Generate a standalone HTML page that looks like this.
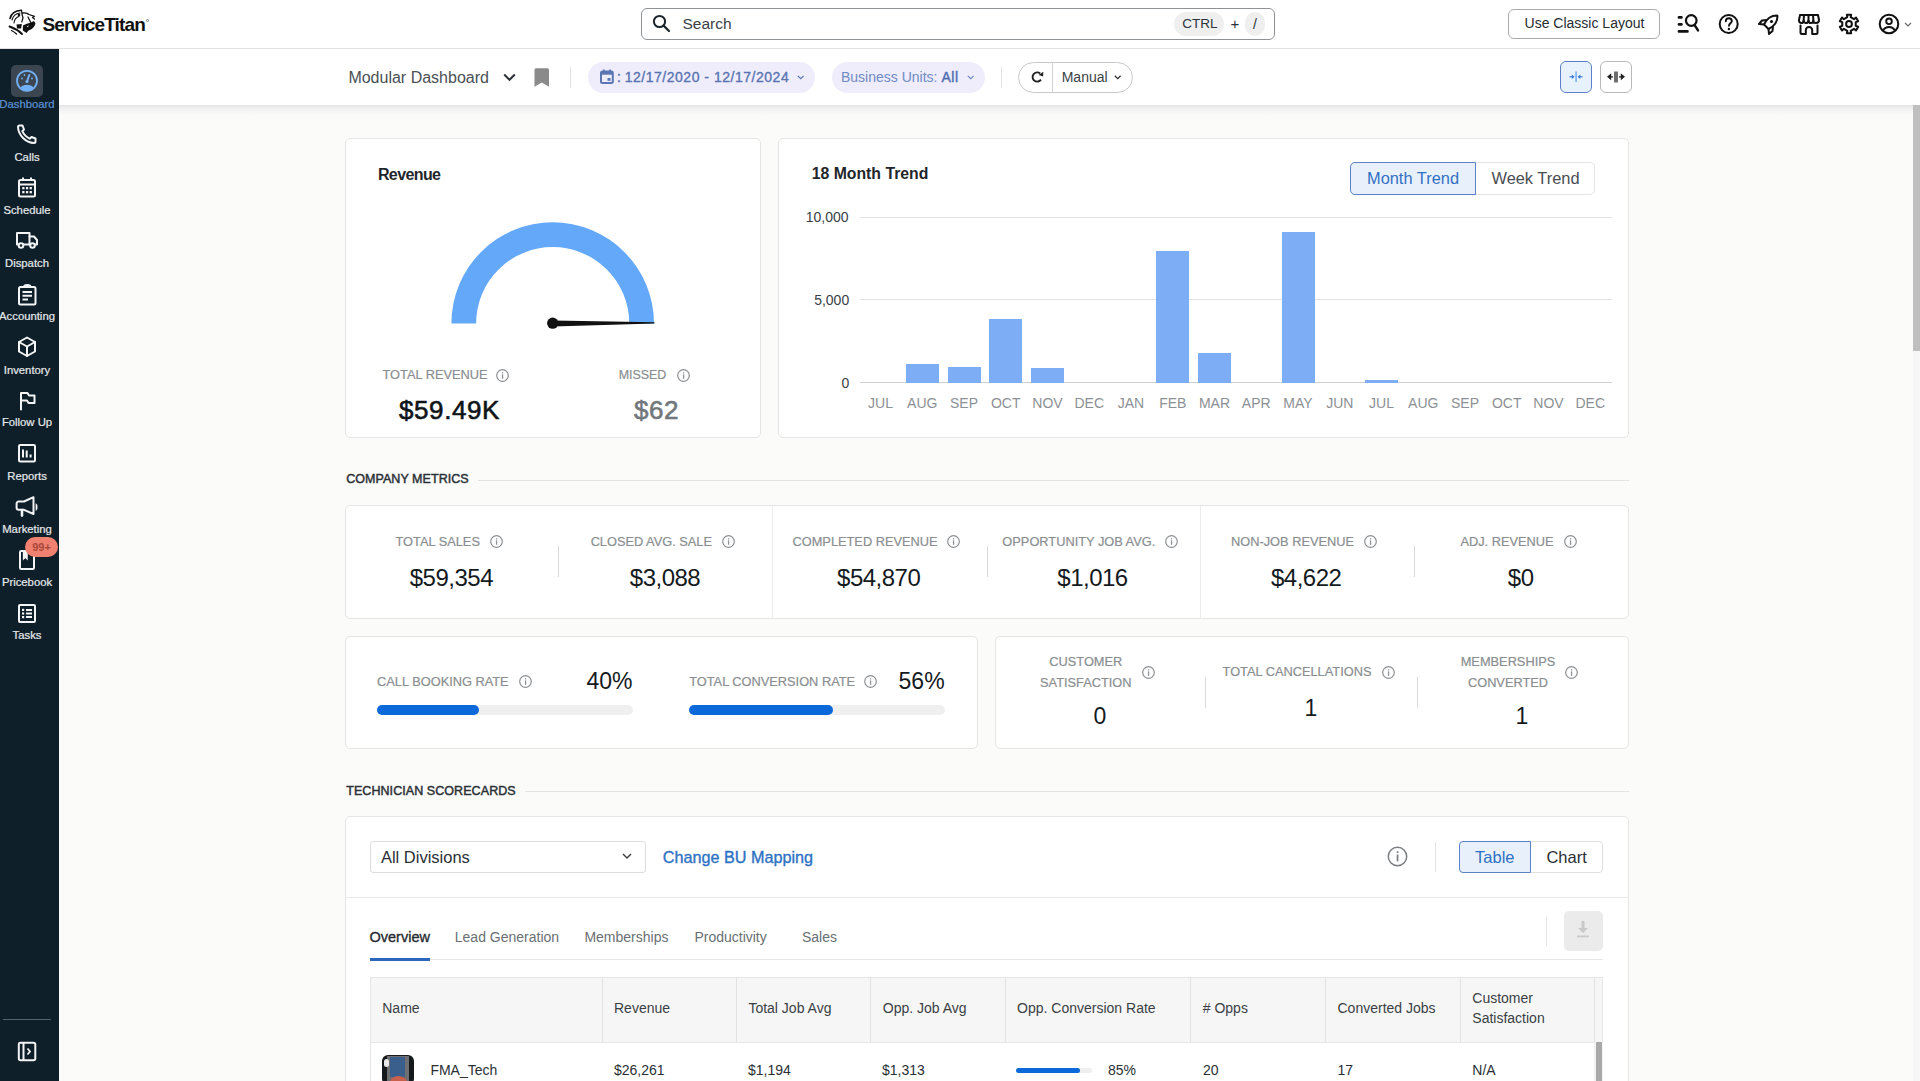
<!DOCTYPE html>
<html><head><meta charset="utf-8">
<style>
*{box-sizing:border-box;margin:0;padding:0}
html,body{width:1920px;height:1081px;overflow:hidden;background:#fbfbfa;font-family:"Liberation Sans",sans-serif;color:#1e2428}
.a{position:absolute}
.t{position:absolute;white-space:nowrap}
svg{display:block;overflow:visible}
.card{position:absolute;background:#fff;border:1px solid #e5e5e5;border-radius:5px}
</style></head>
<body>

<div class="a" style="left:0px;top:0px;width:1920px;height:48px;background:#fff;border-bottom:1px solid #e2e2e2;height:49px"></div>
<svg class="a" style="left:6px;top:6px;" width="34" height="32" viewBox="0 0 34 32">
<g fill="none" stroke="#111" stroke-linecap="round" stroke-linejoin="round">
<path d="M4 12.5 C5 8 9 4.5 15.5 4.2" stroke-width="1.6"/>
<path d="M6 14 C7 10 10 7.5 14 7" stroke-width="1.1"/>
<path d="M8 17 C8.5 13 10.5 11 13 10.5" stroke-width="1.1"/>
<path d="M15.5 4.5 L16 8 L17 12 L15.8 16" stroke-width="1.2"/>
<path d="M16.5 7 C19 6.5 21.5 7 23 8.5 L28.5 10.3 L26.5 11.5 L28.5 13" stroke-width="1.3"/>
<path d="M22 11 C23 13 24 15 25 17" stroke-width="1.2"/>
<path d="M3.5 20.5 C8 22 12 24 16 28" stroke-width="1.9"/>
<path d="M5.5 24.5 C7.5 25.5 9 26.5 10.5 28" stroke-width="1.3"/>
</g>
<path fill="#111" d="M10.5 18.5 L15.8 18 L15.2 22.5 L11 22.5 Z"/>
<path fill="#111" d="M17 19.5 C20 17.5 25 17 28 15 L29.5 17.5 C28.5 21 26 23.5 22.5 24.5 L20.5 27 L16.8 24.5 Z"/>
<path fill="#fff" d="M20.5 20.5 L23 19.5 L22 21 Z"/>
<circle cx="13" cy="9" r="1.3" fill="#111"/>
</svg>
<div class="t" style="top:14.91px;font-size:19px;line-height:19px;color:#111;font-weight:700;letter-spacing:-0.85px;left:42.5px;">ServiceTitan</div>
<div class="a" style="left:146px;top:19px;width:3px;height:3px;border:0.6px solid #777;border-radius:50%"></div>
<div class="a" style="left:641px;top:8px;width:634px;height:32px;border:1.5px solid #8e9295;border-radius:6px;background:#fff"></div>
<svg class="a" style="left:651px;top:13px;" width="22" height="22" viewBox="0 0 22 22"><circle cx="8.5" cy="8.5" r="5.6" fill="none" stroke="#1b252b" stroke-width="2"/><path d="M12.6 12.6 L18 18" stroke="#1b252b" stroke-width="2.2" stroke-linecap="round"/></svg>
<div class="t" style="top:15.88px;font-size:15.5px;line-height:15.5px;color:#3b4045;left:682.5px;">Search</div>
<div class="a" style="left:1174px;top:12px;width:50px;height:24px;background:#efefef;border-radius:12px"></div>
<div class="t" style="top:17.07px;font-size:13.5px;line-height:13.5px;color:#2a3439;left:800px;width:800px;text-align:center;">CTRL</div>
<div class="t" style="top:16.30px;font-size:15px;line-height:15px;color:#2a3439;left:835px;width:800px;text-align:center;">+</div>
<div class="a" style="left:1245px;top:12px;width:20px;height:24px;background:#efefef;border-radius:10px"></div>
<div class="t" style="top:16.65px;font-size:14px;line-height:14px;color:#2a3439;left:855px;width:800px;text-align:center;">/</div>
<div class="a" style="left:1508px;top:9px;width:152px;height:30px;border:1px solid #a9acaf;border-radius:6px"></div>
<div class="t" style="top:16.15px;font-size:14px;line-height:14px;color:#262c30;left:1184.5px;width:800px;text-align:center;">Use Classic Layout</div>
<svg class="a" style="left:1677px;top:13px;" width="24" height="22" viewBox="0 0 24 22"><g stroke="#111" stroke-linecap="round" fill="none">
<path d="M2 4.4 H4.4 M2 11.4 H4.4 M2 18.4 H10.4" stroke-width="2.8"/>
<circle cx="14.25" cy="7.5" r="5.3" stroke-width="2.2"/><path d="M17.8 12.3 L21 17.4" stroke-width="2.4"/></g></svg>
<svg class="a" style="left:1718px;top:13px;" width="22" height="22" viewBox="0 0 22 22"><circle cx="10.7" cy="11" r="9" fill="none" stroke="#111" stroke-width="2"/>
<path d="M7.8 8.3 C7.8 6.3 9.2 5.2 10.8 5.2 C12.6 5.2 13.8 6.4 13.8 8 C13.8 10.2 11 10.4 11 12.8" fill="none" stroke="#111" stroke-width="1.9" stroke-linecap="round"/>
<circle cx="10.9" cy="16" r="1.2" fill="#111"/></svg>
<svg class="a" style="left:1757px;top:14px;" width="22" height="22" viewBox="0 0 22 22"><g fill="none" stroke="#111" stroke-width="2" stroke-linejoin="round">
<path d="M20 1.5 C14 1.5 9.5 5 7 10.5 L11.5 15 C17 12.5 20.5 8 20.5 2 Z"/>
<path d="M7 10.5 L2 10 L5 6.5 L10 6"/>
<path d="M11.5 15 L12 20 L15.5 17 L16 12"/></g>
<circle cx="14.5" cy="7.5" r="1.6" fill="#111"/></svg>
<svg class="a" style="left:1797px;top:13px;" width="24" height="23" viewBox="0 0 24 23"><g fill="none" stroke="#111" stroke-width="2" stroke-linejoin="round" stroke-linecap="round">
<path d="M3 2 H21 L22 7 C22 9 20.5 10 19 10 C17.5 10 16.3 9 16.3 7.5 C16.3 9 15 10 13.7 10 C12.3 10 11.7 9 11.5 7.5 C11.3 9 10.5 10 9 10 C7.5 10 6.8 9 6.7 7.5 C6.5 9 5.5 10 4.5 10 C3 10 1.8 9 2 7 Z"/>
<path d="M7 2 L6.6 7.5"/><path d="M11.5 2 V7.5"/><path d="M16 2 L16.4 7.5"/>
<path d="M3.5 12.5 V19.5 Q3.5 21 5 21 H8.8 V17.2 A3.2 3.2 0 0 1 15.2 17.2 V21 H19 Q20.5 21 20.5 19.5 V12.5"/></g></svg>
<svg class="a" style="left:1839px;top:14px;" width="20" height="20" viewBox="0 0 20 20"><path d="M7.84 0.65 L12.16 0.65 L11.69 3.21 L15.04 5.14 L17.02 3.45 L19.18 7.19 L16.73 8.07 L16.73 11.93 L19.18 12.81 L17.02 16.55 L15.04 14.86 L11.69 16.79 L12.16 19.35 L7.84 19.35 L8.31 16.79 L4.96 14.86 L2.98 16.55 L0.82 12.81 L3.27 11.93 L3.27 8.07 L0.82 7.19 L2.98 3.45 L4.96 5.14 L8.31 3.21Z" fill="none" stroke="#111" stroke-width="2" stroke-linejoin="round"/><circle cx="10" cy="10" r="2.9" fill="none" stroke="#111" stroke-width="2"/></svg>
<svg class="a" style="left:1878px;top:13px;" width="22" height="22" viewBox="0 0 22 22"><circle cx="11" cy="11" r="9.3" fill="none" stroke="#111" stroke-width="2"/>
<circle cx="11" cy="8.3" r="2.8" fill="none" stroke="#111" stroke-width="1.9"/>
<path d="M5 17.5 C6.5 15 8.5 14 11 14 C13.5 14 15.5 15 17 17.5" fill="none" stroke="#111" stroke-width="1.9"/></svg>
<svg class="a" style="left:1904px;top:22px;" width="8" height="5" viewBox="0 0 8 5"><path d="M1 1 L4 4 L7 1" fill="none" stroke="#666" stroke-width="1.2"/></svg>
<div class="a" style="left:59px;top:105px;width:1861px;height:10px;background:linear-gradient(#e3e3e3,#ececec 25%,#f4f4f4 55%,#fbfbfa)"></div>
<div class="a" style="left:59px;top:49px;width:1861px;height:56px;background:#fff"></div>
<div class="t" style="top:70.05px;font-size:16px;line-height:16px;color:#4b5055;left:348.4px;">Modular Dashboard</div>
<svg class="a" style="left:503px;top:73px;" width="14" height="9" viewBox="0 0 14 9"><path d="M1.2 1.5 L6.5 6.8 L11.8 1.5" fill="none" stroke="#2a3035" stroke-width="2"/></svg>
<svg class="a" style="left:534px;top:68px;" width="16" height="19" viewBox="0 0 16 19"><path d="M0.5 2 C0.5 0.8 1.3 0.3 2.5 0.3 H13 C14.2 0.3 15 0.8 15 2 V18.7 L7.75 14.5 L0.5 18.7 Z" fill="#8a8a8a"/></svg>
<div class="a" style="left:570px;top:67px;width:1px;height:21px;background:#e2e2e2"></div>
<div class="a" style="left:588px;top:62px;width:227px;height:31px;background:#efedfb;border-radius:16px"></div>
<svg class="a" style="left:600px;top:69px;" width="14" height="15" viewBox="0 0 14 15"><rect x="1" y="2.5" width="11.8" height="11.5" rx="1.5" fill="none" stroke="#5b77b3" stroke-width="2"/>
<rect x="1" y="2.5" width="11.8" height="3.2" fill="#5b77b3"/><path d="M3.8 0.5 V3 M10 0.5 V3" stroke="#5b77b3" stroke-width="1.8"/>
<rect x="7.5" y="9" width="3" height="2.8" fill="#5b77b3"/></svg>
<div class="t" style="top:70.15px;font-size:14px;line-height:14px;color:#5874b2;-webkit-text-stroke:0.35px #5874b2;left:617px;">:</div>
<div class="t" style="top:70.15px;font-size:14px;line-height:14px;color:#5874b2;-webkit-text-stroke:0.35px #5874b2;letter-spacing:0.52px;left:624.7px;">12/17/2020 - 12/17/2024</div>
<svg class="a" style="left:797px;top:75px;" width="8" height="5" viewBox="0 0 8 5"><path d="M0.8 0.8 L3.7 3.7 L6.6 0.8" fill="none" stroke="#5874b2" stroke-width="1.2"/></svg>
<div class="a" style="left:832px;top:62px;width:153px;height:31px;background:#efedfb;border-radius:16px"></div>
<div class="t" style="left:841px;top:70.15px;font-size:14px;line-height:14px;color:#6e8ac3">Business Units: <b style="color:#4d6cb0;font-weight:400;-webkit-text-stroke:0.4px #4d6cb0;letter-spacing:0.6px">All</b></div>
<svg class="a" style="left:966.5px;top:75px;" width="8" height="5" viewBox="0 0 8 5"><path d="M0.8 0.8 L3.7 3.7 L6.6 0.8" fill="none" stroke="#6e8ac3" stroke-width="1.2"/></svg>
<div class="a" style="left:1001px;top:67px;width:1px;height:21px;background:#e2e2e2"></div>
<div class="a" style="left:1018px;top:62px;width:115px;height:31px;border:1px solid #c9c9c9;border-radius:16px"></div>
<svg class="a" style="left:1030px;top:70px;" width="15" height="15" viewBox="0 0 15 15"><path d="M10.16 3.48 A4.6 4.6 0 1 0 10.97 9.64" fill="none" stroke="#222" stroke-width="1.9"/><path d="M13.3 1.7 L13.1 6.4 L8.6 5.0 Z" fill="#222"/></svg>
<div class="a" style="left:1052px;top:62px;width:1px;height:31px;background:#d2d2d2"></div>
<div class="t" style="top:70.15px;font-size:14px;line-height:14px;color:#3a3f44;left:1061.7px;">Manual</div>
<svg class="a" style="left:1114px;top:75px;" width="8" height="5" viewBox="0 0 8 5"><path d="M0.8 0.8 L3.7 3.7 L6.6 0.8" fill="none" stroke="#333" stroke-width="1.3"/></svg>
<div class="a" style="left:1560px;top:61px;width:32px;height:32px;border:1.5px solid #5a80c8;background:#e8f2fc;border-radius:6px"></div>
<svg class="a" style="left:1568px;top:70px;" width="16" height="14" viewBox="0 0 16 14"><rect x="7.3" y="1.5" width="1.6" height="10.5" fill="#78aef5"/>
<path d="M1.5 6.8 H5.5" stroke="#3b7fd9" stroke-width="1.2"/><path d="M6.6 6.8 L3.8 4.6 V9 Z" fill="#3b7fd9"/>
<path d="M14.5 6.8 H10.5" stroke="#3b7fd9" stroke-width="1.2"/><path d="M9.6 6.8 L12.4 4.6 V9 Z" fill="#3b7fd9"/></svg>
<div class="a" style="left:1600px;top:61px;width:32px;height:32px;border:1px solid #b8b8b8;background:#fff;border-radius:6px"></div>
<svg class="a" style="left:1607px;top:70px;" width="18" height="14" viewBox="0 0 18 14"><rect x="7" y="1.5" width="4" height="11" fill="#6f6f6f"/>
<path d="M1 6.8 L3.6 4.6 V9 Z M3 6.8 H6" fill="#222" stroke="#222" stroke-width="1.2"/>
<path d="M17 6.8 L14.4 4.6 V9 Z M15 6.8 H12" fill="#222" stroke="#222" stroke-width="1.2"/></svg>
<div class="a" style="left:1913px;top:105px;width:7px;height:976px;background:#f6f6f6"></div>
<div class="a" style="left:1913px;top:105px;width:7px;height:246px;background:#bfbfbf"></div>
<div class="a" style="left:0px;top:49px;width:59px;height:1032px;background:#0f1f29"></div>
<div class="a" style="left:11px;top:65px;width:32px;height:32px;background:#3b4650;border-radius:5px"></div>
<svg class="a" style="left:15px;top:69px;" width="24" height="24" viewBox="0 0 24 24"><circle cx="12" cy="11.8" r="10" fill="none" stroke="#72b0f6" stroke-width="1.8"/>
<path d="M5.5 18.5 C7 16.6 9.3 15.8 12 15.8 C14.7 15.8 17 16.6 18.5 18.5 C16.8 20.6 14.5 21.6 12 21.6 C9.5 21.6 7.2 20.6 5.5 18.5 Z" fill="#72b0f6"/>
<path d="M12 12.5 L14.3 6" stroke="#72b0f6" stroke-width="2" stroke-linecap="round"/>
<circle cx="12" cy="12.5" r="1.6" fill="#72b0f6"/>
<circle cx="7" cy="9.5" r="0.9" fill="#72b0f6"/><circle cx="9.5" cy="6" r="0.9" fill="#72b0f6"/><circle cx="17" cy="9.5" r="0.9" fill="#72b0f6"/></svg>
<div class="t" style="top:98.73px;font-size:11.3px;line-height:11.3px;color:#5f93d6;-webkit-text-stroke:0.2px #5f93d6;left:-373px;width:800px;text-align:center;">Dashboard</div>
<div class="t" style="top:152.13px;font-size:11.3px;line-height:11.3px;color:#e6e9eb;-webkit-text-stroke:0.2px #e6e9eb;left:-373px;width:800px;text-align:center;">Calls</div>
<div class="t" style="top:204.83px;font-size:11.3px;line-height:11.3px;color:#e6e9eb;-webkit-text-stroke:0.2px #e6e9eb;left:-373px;width:800px;text-align:center;">Schedule</div>
<div class="t" style="top:258.23px;font-size:11.3px;line-height:11.3px;color:#e6e9eb;-webkit-text-stroke:0.2px #e6e9eb;left:-373px;width:800px;text-align:center;">Dispatch</div>
<div class="t" style="top:311.43px;font-size:11.3px;line-height:11.3px;color:#e6e9eb;-webkit-text-stroke:0.2px #e6e9eb;left:-373px;width:800px;text-align:center;">Accounting</div>
<div class="t" style="top:364.83px;font-size:11.3px;line-height:11.3px;color:#e6e9eb;-webkit-text-stroke:0.2px #e6e9eb;left:-373px;width:800px;text-align:center;">Inventory</div>
<div class="t" style="top:417.43px;font-size:11.3px;line-height:11.3px;color:#e6e9eb;-webkit-text-stroke:0.2px #e6e9eb;left:-373px;width:800px;text-align:center;">Follow Up</div>
<div class="t" style="top:470.93px;font-size:11.3px;line-height:11.3px;color:#e6e9eb;-webkit-text-stroke:0.2px #e6e9eb;left:-373px;width:800px;text-align:center;">Reports</div>
<div class="t" style="top:523.73px;font-size:11.3px;line-height:11.3px;color:#e6e9eb;-webkit-text-stroke:0.2px #e6e9eb;left:-373px;width:800px;text-align:center;">Marketing</div>
<div class="t" style="top:577.13px;font-size:11.3px;line-height:11.3px;color:#e6e9eb;-webkit-text-stroke:0.2px #e6e9eb;left:-373px;width:800px;text-align:center;">Pricebook</div>
<div class="t" style="top:629.83px;font-size:11.3px;line-height:11.3px;color:#e6e9eb;-webkit-text-stroke:0.2px #e6e9eb;left:-373px;width:800px;text-align:center;">Tasks</div>
<svg class="a" style="left:17px;top:124px;" width="20" height="20" viewBox="0 0 20 20"><path fill="none" stroke="#f2f4f5" stroke-width="2" stroke-linejoin="round" stroke-linecap="round" d="M2.5 1.5 H5.5 L7 5.5 L5.3 7.2 C6.8 10.5 9.5 13.2 12.8 14.7 L14.5 13 L18.5 14.5 V17.5 C18.5 18.3 17.8 19 17 19 C8.7 18.6 1.4 11.3 1 3 C1 2.2 1.7 1.5 2.5 1.5 Z"/></svg>
<svg class="a" style="left:17px;top:176px;" width="20" height="23" viewBox="0 0 20 23"><rect x="2" y="4" width="16" height="16.5" rx="1.5" fill="none" stroke="#f2f4f5" stroke-width="2" stroke-linejoin="round" stroke-linecap="round"/>
<path d="M2 8.5 H18" stroke="#f2f4f5" stroke-width="2"/><path d="M6 1.5 V5 M14 1.5 V5" stroke="#f2f4f5" stroke-width="2"/>
<g fill="#f2f4f5"><rect x="5.2" y="11" width="2.3" height="2.3"/><rect x="8.9" y="11" width="2.3" height="2.3"/><rect x="12.6" y="11" width="2.3" height="2.3"/>
<rect x="5.2" y="15" width="2.3" height="2.3"/><rect x="8.9" y="15" width="2.3" height="2.3"/><rect x="12.6" y="15" width="2.3" height="2.3"/></g></svg>
<svg class="a" style="left:15px;top:231px;" width="24" height="19" viewBox="0 0 24 19"><path fill="none" stroke="#f2f4f5" stroke-width="2" stroke-linejoin="round" stroke-linecap="round" d="M2 2 H14.5 V13.5 H2 Z"/><path fill="none" stroke="#f2f4f5" stroke-width="2" stroke-linejoin="round" stroke-linecap="round" d="M14.5 5.5 H19 L22 9 V13.5 H14.5"/>
<circle cx="6" cy="14.5" r="2.3" fill="#0f1f29" stroke="#f2f4f5" stroke-width="2"/><circle cx="17.5" cy="14.5" r="2.3" fill="#0f1f29" stroke="#f2f4f5" stroke-width="2"/></svg>
<svg class="a" style="left:17px;top:284px;" width="21" height="22" viewBox="0 0 21 22"><rect x="2" y="3" width="16.5" height="17.5" rx="1.5" fill="none" stroke="#f2f4f5" stroke-width="2" stroke-linejoin="round" stroke-linecap="round"/>
<path d="M7 3 C7 1.5 8.5 1 10.25 1 C12 1 13.5 1.5 13.5 3" fill="none" stroke="#f2f4f5" stroke-width="2" stroke-linejoin="round" stroke-linecap="round"/>
<path d="M5.5 8 H15 M5.5 11.8 H15 M5.5 15.5 H11" stroke="#f2f4f5" stroke-width="2"/></svg>
<svg class="a" style="left:17px;top:336px;" width="20" height="22" viewBox="0 0 20 22"><path fill="none" stroke="#f2f4f5" stroke-width="2" stroke-linejoin="round" stroke-linecap="round" d="M10 1.5 L18 6 V15.5 L10 20 L2 15.5 V6 Z"/><path fill="none" stroke="#f2f4f5" stroke-width="2" stroke-linejoin="round" stroke-linecap="round" d="M2 6 L10 10.5 L18 6 M10 10.5 V20"/></svg>
<svg class="a" style="left:19px;top:391px;" width="17" height="20" viewBox="0 0 17 20"><path fill="none" stroke="#f2f4f5" stroke-width="2" stroke-linejoin="round" stroke-linecap="round" d="M2 18.5 V2 H8.5 L10 4.5 H15.5 V12 H9.5 L8 9.5 H2"/></svg>
<svg class="a" style="left:17px;top:443px;" width="20" height="21" viewBox="0 0 20 21"><rect x="2" y="2" width="16" height="16.5" rx="1.2" fill="none" stroke="#f2f4f5" stroke-width="2" stroke-linejoin="round" stroke-linecap="round"/>
<path d="M6 6.5 V14.5 M9.7 7.5 V14.5 M13.6 11.5 V14.5" stroke="#f2f4f5" stroke-width="2"/></svg>
<svg class="a" style="left:15px;top:496px;" width="24" height="22" viewBox="0 0 24 22"><path fill="none" stroke="#f2f4f5" stroke-width="2" stroke-linejoin="round" stroke-linecap="round" d="M9 5.5 L18.5 1.2 V18 L9 13.8 H3.6 C2.5 13.8 1.6 12.9 1.6 11.8 V7.5 C1.6 6.4 2.5 5.5 3.6 5.5 Z"/>
<path d="M7 14 V19.6" stroke="#f2f4f5" stroke-width="2.6" stroke-linecap="round"/><path d="M20.6 7.2 C23.2 7.8 23.2 14.2 20.6 14.8 Z" fill="#f2f4f5"/></svg>
<svg class="a" style="left:18px;top:549px;" width="18" height="22" viewBox="0 0 18 22"><rect x="2" y="2" width="14" height="18" rx="1.2" fill="none" stroke="#f2f4f5" stroke-width="2" stroke-linejoin="round" stroke-linecap="round"/>
<path d="M5.5 2 V10 L7.3 8.3 L9.1 10 V2" fill="#f2f4f5" stroke="#f2f4f5" stroke-width="1.3"/></svg>
<div class="a" style="left:25px;top:537px;width:33px;height:20px;background:#f0806f;border-radius:10px"></div>
<div class="t" style="top:541.69px;font-size:11px;line-height:11px;color:#a9473b;font-weight:700;left:-358.5px;width:800px;text-align:center;">99+</div>
<svg class="a" style="left:17px;top:603px;" width="20" height="21" viewBox="0 0 20 21"><rect x="2" y="2" width="16" height="17" rx="1" fill="none" stroke="#f2f4f5" stroke-width="2" stroke-linejoin="round" stroke-linecap="round"/>
<g fill="#f2f4f5"><rect x="5" y="5.8" width="2.2" height="2.2"/><rect x="5" y="9.4" width="2.2" height="2.2"/><rect x="5" y="13" width="2.2" height="2.2"/></g>
<path d="M9 6.9 H15 M9 10.5 H15 M9 14.1 H15" stroke="#f2f4f5" stroke-width="2"/></svg>
<div class="a" style="left:3px;top:1018.5px;width:48px;height:1.2px;background:#56626b"></div>
<svg class="a" style="left:17px;top:1041px;" width="20" height="21" viewBox="0 0 20 21"><rect x="1.8" y="1.8" width="16.5" height="17.5" rx="1.8" fill="none" stroke="#f2f4f5" stroke-width="2" stroke-linejoin="round" stroke-linecap="round"/>
<path d="M6.5 2 V19" stroke="#f2f4f5" stroke-width="2"/><path d="M10.5 7.5 L13 10.5 L10.5 13.5" fill="none" stroke="#f2f4f5" stroke-width="1.8"/></svg>
<div class="card" style="left:344.5px;top:137.5px;width:416px;height:300.5px"></div>
<div class="t" style="top:166.75px;font-size:16px;line-height:16px;color:#1f262b;font-weight:700;letter-spacing:-0.6px;left:377.9px;">Revenue</div>
<svg class="a" style="left:0px;top:0px;width:1920px;height:1081px;left:0;top:0" width="1" height="1" viewBox="0 0 1920 1081"><path d="M451.40000000000003 323.6 A101.3 101.3 0 0 1 654.0 323.6 L629.3000000000001 323.6 A76.6 76.6 0 0 0 476.1 323.6 Z" fill="#64a9f9"/>
<path d="M552.7 320.40000000000003 L654.5 322.3 L654.5 323.5 L552.7 326.6 Z" fill="#111"/>
<circle cx="552.7" cy="323.20000000000005" r="5.6" fill="#111"/></svg>
<div class="t" style="top:368.96px;font-size:12.8px;line-height:12.8px;color:#8a8e91;-webkit-text-stroke:0.2px #8a8e91;left:382.5px;">TOTAL REVENUE</div>
<svg class="a" style="left:495.8px;top:368.8px" width="13" height="13" viewBox="0 0 13 13"><circle cx="6.5" cy="6.5" r="5.8" fill="none" stroke="#8d9194" stroke-width="1.2"/><rect x="5.9" y="5.4" width="1.3" height="4.4" fill="#8d9194"/><rect x="5.9" y="3.2" width="1.3" height="1.3" fill="#8d9194"/></svg>
<div class="t" style="top:397.19px;font-size:26px;line-height:26px;color:#0e1418;-webkit-text-stroke:0.6px #0e1418;letter-spacing:0.6px;left:399px;">$59.49K</div>
<div class="t" style="top:369.22px;font-size:12.5px;line-height:12.5px;color:#8a8e91;-webkit-text-stroke:0.2px #8a8e91;letter-spacing:-0.1px;left:618.8px;">MISSED</div>
<svg class="a" style="left:676.5px;top:368.8px" width="13" height="13" viewBox="0 0 13 13"><circle cx="6.5" cy="6.5" r="5.8" fill="none" stroke="#8d9194" stroke-width="1.2"/><rect x="5.9" y="5.4" width="1.3" height="4.4" fill="#8d9194"/><rect x="5.9" y="3.2" width="1.3" height="1.3" fill="#8d9194"/></svg>
<div class="t" style="top:397.19px;font-size:26px;line-height:26px;color:#72777b;-webkit-text-stroke:0.6px #72777b;letter-spacing:0.6px;left:634px;">$62</div>
<div class="card" style="left:777.5px;top:137.5px;width:851px;height:300.5px"></div>
<div class="t" style="top:165.82px;font-size:15.8px;line-height:15.8px;color:#1f262b;font-weight:700;left:811.7px;">18 Month Trend</div>
<div class="a" style="left:1350px;top:162px;width:245px;height:33px;border:1px solid #e3e3e3;border-radius:5px;background:#fff"></div>
<div class="a" style="left:1350px;top:162px;width:126px;height:33px;border:1.5px solid #5b82c6;border-radius:5px 0 0 5px;background:#e8f1fb"></div>
<div class="t" style="top:169.61px;font-size:16.4px;line-height:16.4px;color:#3170c4;left:1013px;width:800px;text-align:center;">Month Trend</div>
<div class="t" style="top:169.61px;font-size:16.4px;line-height:16.4px;color:#484d51;left:1135.5px;width:800px;text-align:center;">Week Trend</div>
<div class="t" style="top:209.85px;font-size:14px;line-height:14px;color:#3a4045;left:48.5px;width:800px;text-align:right;">10,000</div>
<div class="t" style="top:293.15px;font-size:14px;line-height:14px;color:#3a4045;left:49.200000000000045px;width:800px;text-align:right;">5,000</div>
<div class="t" style="top:376.35px;font-size:14px;line-height:14px;color:#3a4045;left:49.200000000000045px;width:800px;text-align:right;">0</div>
<div class="a" style="left:859.5px;top:216.5px;width:752px;height:1px;background:#e3e3e3"></div>
<div class="a" style="left:859.5px;top:299px;width:752px;height:1px;background:#e3e3e3"></div>
<div class="a" style="left:859.5px;top:382px;width:752px;height:1.3px;background:#cfcfcf"></div>
<div class="t" style="top:395.65px;font-size:14px;line-height:14px;color:#8c9094;left:480.5px;width:800px;text-align:center;">JUL</div>
<div class="a" style="left:905.75px;top:364.2px;width:33.2px;height:18.600000000000023px;background:#7cadf5"></div>
<div class="t" style="top:395.65px;font-size:14px;line-height:14px;color:#8c9094;left:522.25px;width:800px;text-align:center;">AUG</div>
<div class="a" style="left:947.5px;top:366.7px;width:33.2px;height:16.100000000000023px;background:#7cadf5"></div>
<div class="t" style="top:395.65px;font-size:14px;line-height:14px;color:#8c9094;left:564.0px;width:800px;text-align:center;">SEP</div>
<div class="a" style="left:989.25px;top:318.8px;width:33.2px;height:64.0px;background:#7cadf5"></div>
<div class="t" style="top:395.65px;font-size:14px;line-height:14px;color:#8c9094;left:605.75px;width:800px;text-align:center;">OCT</div>
<div class="a" style="left:1031.0px;top:367.5px;width:33.2px;height:15.300000000000011px;background:#7cadf5"></div>
<div class="t" style="top:395.65px;font-size:14px;line-height:14px;color:#8c9094;left:647.5px;width:800px;text-align:center;">NOV</div>
<div class="t" style="top:395.65px;font-size:14px;line-height:14px;color:#8c9094;left:689.25px;width:800px;text-align:center;">DEC</div>
<div class="t" style="top:395.65px;font-size:14px;line-height:14px;color:#8c9094;left:731.0px;width:800px;text-align:center;">JAN</div>
<div class="a" style="left:1156.25px;top:251.4px;width:33.2px;height:131.4px;background:#7cadf5"></div>
<div class="t" style="top:395.65px;font-size:14px;line-height:14px;color:#8c9094;left:772.75px;width:800px;text-align:center;">FEB</div>
<div class="a" style="left:1198.0px;top:353.2px;width:33.2px;height:29.600000000000023px;background:#7cadf5"></div>
<div class="t" style="top:395.65px;font-size:14px;line-height:14px;color:#8c9094;left:814.5px;width:800px;text-align:center;">MAR</div>
<div class="t" style="top:395.65px;font-size:14px;line-height:14px;color:#8c9094;left:856.25px;width:800px;text-align:center;">APR</div>
<div class="a" style="left:1281.5px;top:232px;width:33.2px;height:150.8px;background:#7cadf5"></div>
<div class="t" style="top:395.65px;font-size:14px;line-height:14px;color:#8c9094;left:898.0px;width:800px;text-align:center;">MAY</div>
<div class="t" style="top:395.65px;font-size:14px;line-height:14px;color:#8c9094;left:939.75px;width:800px;text-align:center;">JUN</div>
<div class="a" style="left:1365.0px;top:379.5px;width:33.2px;height:3.3000000000000114px;background:#7cadf5"></div>
<div class="t" style="top:395.65px;font-size:14px;line-height:14px;color:#8c9094;left:981.5px;width:800px;text-align:center;">JUL</div>
<div class="t" style="top:395.65px;font-size:14px;line-height:14px;color:#8c9094;left:1023.25px;width:800px;text-align:center;">AUG</div>
<div class="t" style="top:395.65px;font-size:14px;line-height:14px;color:#8c9094;left:1065.0px;width:800px;text-align:center;">SEP</div>
<div class="t" style="top:395.65px;font-size:14px;line-height:14px;color:#8c9094;left:1106.75px;width:800px;text-align:center;">OCT</div>
<div class="t" style="top:395.65px;font-size:14px;line-height:14px;color:#8c9094;left:1148.5px;width:800px;text-align:center;">NOV</div>
<div class="t" style="top:395.65px;font-size:14px;line-height:14px;color:#8c9094;left:1190.25px;width:800px;text-align:center;">DEC</div>
<div class="t" style="top:473.22px;font-size:12.5px;line-height:12.5px;color:#2a3035;-webkit-text-stroke:0.45px #2a3035;letter-spacing:0.05px;left:346.2px;">COMPANY METRICS</div>
<div class="a" style="left:477.5px;top:479.5px;width:1151px;height:1px;background:#e3e3e3"></div>
<div class="card" style="left:344.5px;top:505px;width:1284px;height:114px"></div>
<div class="a" style="left:771.5px;top:506px;width:1px;height:112px;background:#ececec"></div>
<div class="a" style="left:1199.5px;top:506px;width:1px;height:112px;background:#ececec"></div>
<div class="a" style="left:558px;top:546px;width:1.3px;height:31px;background:#d9d9d9"></div>
<div class="a" style="left:986.5px;top:546px;width:1.3px;height:31px;background:#d9d9d9"></div>
<div class="a" style="left:1414px;top:546px;width:1.3px;height:31px;background:#d9d9d9"></div>
<div class="t" style="top:535.86px;font-size:12.8px;line-height:12.8px;color:#8a8e91;-webkit-text-stroke:0.2px #8a8e91;left:395.52px;">TOTAL SALES</div>
<svg class="a" style="left:489.88px;top:535.4px" width="13" height="13" viewBox="0 0 13 13"><circle cx="6.5" cy="6.5" r="5.8" fill="none" stroke="#8d9194" stroke-width="1.2"/><rect x="5.9" y="5.4" width="1.3" height="4.4" fill="#8d9194"/><rect x="5.9" y="3.2" width="1.3" height="1.3" fill="#8d9194"/></svg>
<div class="t" style="top:565.88px;font-size:24px;line-height:24px;color:#141a1e;letter-spacing:-0.5px;left:51.39999999999998px;width:800px;text-align:center;">$59,354</div>
<div class="t" style="top:535.86px;font-size:12.8px;line-height:12.8px;color:#8a8e91;-webkit-text-stroke:0.2px #8a8e91;left:590.63px;">CLOSED AVG. SALE</div>
<svg class="a" style="left:721.97px;top:535.4px" width="13" height="13" viewBox="0 0 13 13"><circle cx="6.5" cy="6.5" r="5.8" fill="none" stroke="#8d9194" stroke-width="1.2"/><rect x="5.9" y="5.4" width="1.3" height="4.4" fill="#8d9194"/><rect x="5.9" y="3.2" width="1.3" height="1.3" fill="#8d9194"/></svg>
<div class="t" style="top:565.88px;font-size:24px;line-height:24px;color:#141a1e;letter-spacing:-0.5px;left:265.0px;width:800px;text-align:center;">$3,088</div>
<div class="t" style="top:535.86px;font-size:12.8px;line-height:12.8px;color:#8a8e91;-webkit-text-stroke:0.2px #8a8e91;left:792.51px;">COMPLETED REVENUE</div>
<svg class="a" style="left:947.49px;top:535.4px" width="13" height="13" viewBox="0 0 13 13"><circle cx="6.5" cy="6.5" r="5.8" fill="none" stroke="#8d9194" stroke-width="1.2"/><rect x="5.9" y="5.4" width="1.3" height="4.4" fill="#8d9194"/><rect x="5.9" y="3.2" width="1.3" height="1.3" fill="#8d9194"/></svg>
<div class="t" style="top:565.88px;font-size:24px;line-height:24px;color:#141a1e;letter-spacing:-0.5px;left:478.70000000000005px;width:800px;text-align:center;">$54,870</div>
<div class="t" style="top:535.86px;font-size:12.8px;line-height:12.8px;color:#8a8e91;-webkit-text-stroke:0.2px #8a8e91;left:1002.37px;">OPPORTUNITY JOB AVG.</div>
<svg class="a" style="left:1165.23px;top:535.4px" width="13" height="13" viewBox="0 0 13 13"><circle cx="6.5" cy="6.5" r="5.8" fill="none" stroke="#8d9194" stroke-width="1.2"/><rect x="5.9" y="5.4" width="1.3" height="4.4" fill="#8d9194"/><rect x="5.9" y="3.2" width="1.3" height="1.3" fill="#8d9194"/></svg>
<div class="t" style="top:565.88px;font-size:24px;line-height:24px;color:#141a1e;letter-spacing:-0.5px;left:692.5px;width:800px;text-align:center;">$1,016</div>
<div class="t" style="top:535.86px;font-size:12.8px;line-height:12.8px;color:#8a8e91;-webkit-text-stroke:0.2px #8a8e91;left:1231.02px;">NON-JOB REVENUE</div>
<svg class="a" style="left:1363.98px;top:535.4px" width="13" height="13" viewBox="0 0 13 13"><circle cx="6.5" cy="6.5" r="5.8" fill="none" stroke="#8d9194" stroke-width="1.2"/><rect x="5.9" y="5.4" width="1.3" height="4.4" fill="#8d9194"/><rect x="5.9" y="3.2" width="1.3" height="1.3" fill="#8d9194"/></svg>
<div class="t" style="top:565.88px;font-size:24px;line-height:24px;color:#141a1e;letter-spacing:-0.5px;left:906.2px;width:800px;text-align:center;">$4,622</div>
<div class="t" style="top:535.86px;font-size:12.8px;line-height:12.8px;color:#8a8e91;-webkit-text-stroke:0.2px #8a8e91;left:1460.44px;">ADJ. REVENUE</div>
<svg class="a" style="left:1563.56px;top:535.4px" width="13" height="13" viewBox="0 0 13 13"><circle cx="6.5" cy="6.5" r="5.8" fill="none" stroke="#8d9194" stroke-width="1.2"/><rect x="5.9" y="5.4" width="1.3" height="4.4" fill="#8d9194"/><rect x="5.9" y="3.2" width="1.3" height="1.3" fill="#8d9194"/></svg>
<div class="t" style="top:565.88px;font-size:24px;line-height:24px;color:#141a1e;letter-spacing:-0.5px;left:1120.7px;width:800px;text-align:center;">$0</div>
<div class="card" style="left:344.5px;top:635.5px;width:633px;height:113.5px"></div>
<div class="t" style="top:676.06px;font-size:12.8px;line-height:12.8px;color:#8a8e91;-webkit-text-stroke:0.2px #8a8e91;left:377.1px;">CALL BOOKING RATE</div>
<svg class="a" style="left:519px;top:674.5px" width="13" height="13" viewBox="0 0 13 13"><circle cx="6.5" cy="6.5" r="5.8" fill="none" stroke="#8d9194" stroke-width="1.2"/><rect x="5.9" y="5.4" width="1.3" height="4.4" fill="#8d9194"/><rect x="5.9" y="3.2" width="1.3" height="1.3" fill="#8d9194"/></svg>
<div class="t" style="top:669.83px;font-size:23px;line-height:23px;color:#141a1e;left:-167.5px;width:800px;text-align:right;">40%</div>
<div class="a" style="left:377px;top:705px;width:255.5px;height:10px;background:#efefef;border-radius:5px"></div>
<div class="a" style="left:377px;top:705px;width:102.2px;height:10px;background:#0b69da;border-radius:5px"></div>
<div class="t" style="top:676.06px;font-size:12.8px;line-height:12.8px;color:#8a8e91;-webkit-text-stroke:0.2px #8a8e91;left:689.2px;">TOTAL CONVERSION RATE</div>
<svg class="a" style="left:864px;top:674.5px" width="13" height="13" viewBox="0 0 13 13"><circle cx="6.5" cy="6.5" r="5.8" fill="none" stroke="#8d9194" stroke-width="1.2"/><rect x="5.9" y="5.4" width="1.3" height="4.4" fill="#8d9194"/><rect x="5.9" y="3.2" width="1.3" height="1.3" fill="#8d9194"/></svg>
<div class="t" style="top:669.83px;font-size:23px;line-height:23px;color:#141a1e;left:144.60000000000002px;width:800px;text-align:right;">56%</div>
<div class="a" style="left:689px;top:705px;width:256px;height:10px;background:#efefef;border-radius:5px"></div>
<div class="a" style="left:689px;top:705px;width:143.6px;height:10px;background:#0b69da;border-radius:5px"></div>
<div class="card" style="left:994.5px;top:635.5px;width:634px;height:113.5px"></div>
<div class="t" style="top:655.96px;font-size:12.8px;line-height:12.8px;color:#8a8e91;-webkit-text-stroke:0.2px #8a8e91;left:685.8px;width:800px;text-align:center;">CUSTOMER</div>
<div class="t" style="top:676.56px;font-size:12.8px;line-height:12.8px;color:#8a8e91;-webkit-text-stroke:0.2px #8a8e91;left:685.8px;width:800px;text-align:center;">SATISFACTION</div>
<svg class="a" style="left:1142px;top:665.5px" width="13" height="13" viewBox="0 0 13 13"><circle cx="6.5" cy="6.5" r="5.8" fill="none" stroke="#8d9194" stroke-width="1.2"/><rect x="5.9" y="5.4" width="1.3" height="4.4" fill="#8d9194"/><rect x="5.9" y="3.2" width="1.3" height="1.3" fill="#8d9194"/></svg>
<div class="t" style="top:705.23px;font-size:23px;line-height:23px;color:#141a1e;left:700px;width:800px;text-align:center;">0</div>
<div class="a" style="left:1205px;top:676.5px;width:1.3px;height:31px;background:#d9d9d9"></div>
<div class="t" style="top:666.36px;font-size:12.8px;line-height:12.8px;color:#8a8e91;-webkit-text-stroke:0.2px #8a8e91;left:897px;width:800px;text-align:center;">TOTAL CANCELLATIONS</div>
<svg class="a" style="left:1382px;top:665.5px" width="13" height="13" viewBox="0 0 13 13"><circle cx="6.5" cy="6.5" r="5.8" fill="none" stroke="#8d9194" stroke-width="1.2"/><rect x="5.9" y="5.4" width="1.3" height="4.4" fill="#8d9194"/><rect x="5.9" y="3.2" width="1.3" height="1.3" fill="#8d9194"/></svg>
<div class="t" style="top:696.53px;font-size:23px;line-height:23px;color:#141a1e;left:911px;width:800px;text-align:center;">1</div>
<div class="a" style="left:1417px;top:676.5px;width:1.3px;height:31px;background:#d9d9d9"></div>
<div class="t" style="top:655.96px;font-size:12.8px;line-height:12.8px;color:#8a8e91;-webkit-text-stroke:0.2px #8a8e91;left:1108px;width:800px;text-align:center;">MEMBERSHIPS</div>
<div class="t" style="top:676.56px;font-size:12.8px;line-height:12.8px;color:#8a8e91;-webkit-text-stroke:0.2px #8a8e91;left:1108px;width:800px;text-align:center;">CONVERTED</div>
<svg class="a" style="left:1564.5px;top:665.5px" width="13" height="13" viewBox="0 0 13 13"><circle cx="6.5" cy="6.5" r="5.8" fill="none" stroke="#8d9194" stroke-width="1.2"/><rect x="5.9" y="5.4" width="1.3" height="4.4" fill="#8d9194"/><rect x="5.9" y="3.2" width="1.3" height="1.3" fill="#8d9194"/></svg>
<div class="t" style="top:705.23px;font-size:23px;line-height:23px;color:#141a1e;left:1121.8px;width:800px;text-align:center;">1</div>
<div class="t" style="top:784.62px;font-size:12.5px;line-height:12.5px;color:#2a3035;-webkit-text-stroke:0.45px #2a3035;letter-spacing:0.07px;left:346.2px;">TECHNICIAN SCORECARDS</div>
<div class="a" style="left:524.5px;top:790.5px;width:1104px;height:1px;background:#e3e3e3"></div>
<div class="card" style="left:344.5px;top:816px;width:1284px;height:300px"></div>
<div class="a" style="left:369.5px;top:841px;width:276.5px;height:31.5px;border:1px solid #dddddd;border-radius:3px;background:#fff"></div>
<div class="t" style="top:848.93px;font-size:16.5px;line-height:16.5px;color:#2a3035;left:380.9px;">All Divisions</div>
<svg class="a" style="left:622px;top:853px;" width="10" height="7" viewBox="0 0 10 7"><path d="M1 1 L5 5 L9 1" fill="none" stroke="#444" stroke-width="1.5"/></svg>
<div class="t" style="top:849.18px;font-size:16.2px;line-height:16.2px;color:#2f72c4;-webkit-text-stroke:0.35px #2f72c4;left:662.8px;">Change BU Mapping</div>
<svg class="a" style="left:1387px;top:846px;" width="21" height="21" viewBox="0 0 21 21"><circle cx="10.5" cy="10.5" r="9.2" fill="none" stroke="#7a7e81" stroke-width="1.5"/><rect x="9.7" y="8.6" width="1.7" height="6.8" fill="#7a7e81"/><rect x="9.7" y="5.3" width="1.7" height="1.8" fill="#7a7e81"/></svg>
<div class="a" style="left:1434.5px;top:842px;width:1px;height:30px;background:#e3e3e3"></div>
<div class="a" style="left:1459px;top:841px;width:144px;height:31.5px;border:1px solid #e0e0e0;border-radius:4px;background:#fff"></div>
<div class="a" style="left:1459px;top:841px;width:72px;height:31.5px;border:1.5px solid #5b82c6;border-radius:4px 0 0 4px;background:#e8f1fb"></div>
<div class="t" style="top:848.93px;font-size:16.5px;line-height:16.5px;color:#2f6fc2;left:1094.8px;width:800px;text-align:center;">Table</div>
<div class="t" style="top:848.93px;font-size:16.5px;line-height:16.5px;color:#2a3035;left:1166.6px;width:800px;text-align:center;">Chart</div>
<div class="a" style="left:345.5px;top:897px;width:1282px;height:1px;background:#e8e8e8"></div>
<div class="t" style="top:929.72px;font-size:14.5px;line-height:14.5px;color:#262b2f;-webkit-text-stroke:0.35px #262b2f;left:369.5px;">Overview</div>
<div class="t" style="top:930.15px;font-size:14px;line-height:14px;color:#6a6f73;left:454.8px;">Lead Generation</div>
<div class="t" style="top:930.15px;font-size:14px;line-height:14px;color:#6a6f73;left:584.4px;">Memberships</div>
<div class="t" style="top:930.15px;font-size:14px;line-height:14px;color:#6a6f73;left:694.4px;">Productivity</div>
<div class="t" style="top:930.15px;font-size:14px;line-height:14px;color:#6a6f73;left:802px;">Sales</div>
<div class="a" style="left:369.5px;top:959.3px;width:1233.5px;height:1px;background:#e6e6e6"></div>
<div class="a" style="left:369.5px;top:957.5px;width:60.5px;height:3px;background:#2d67bd"></div>
<div class="a" style="left:1546px;top:917px;width:1px;height:29px;background:#e3e3e3"></div>
<div class="a" style="left:1563.5px;top:911px;width:39.5px;height:39.5px;background:#ebebeb;border-radius:5px"></div>
<svg class="a" style="left:1575px;top:920px;" width="16" height="20" viewBox="0 0 16 20"><path d="M6.5 1 H9.5 V8 H13 L8 13 L3 8 H6.5 Z" fill="#c9c9c9"/><rect x="2" y="15.5" width="12" height="1.8" fill="#c9c9c9"/></svg>
<div class="a" style="left:369.5px;top:976.5px;width:1233.5px;height:66px;background:#f6f6f6;border:1px solid #e6e6e6"></div>
<div class="a" style="left:601.6px;top:977px;width:1px;height:65px;background:#e2e2e2"></div>
<div class="a" style="left:735.6px;top:977px;width:1px;height:65px;background:#e2e2e2"></div>
<div class="a" style="left:870.4px;top:977px;width:1px;height:65px;background:#e2e2e2"></div>
<div class="a" style="left:1004.75px;top:977px;width:1px;height:65px;background:#e2e2e2"></div>
<div class="a" style="left:1190.4px;top:977px;width:1px;height:65px;background:#e2e2e2"></div>
<div class="a" style="left:1324.8px;top:977px;width:1px;height:65px;background:#e2e2e2"></div>
<div class="a" style="left:1459.5px;top:977px;width:1px;height:65px;background:#e2e2e2"></div>
<div class="a" style="left:1593.6px;top:977px;width:1px;height:65px;background:#e2e2e2"></div>
<div class="t" style="top:1000.95px;font-size:14px;line-height:14px;color:#3a3f44;left:382.25px;">Name</div>
<div class="t" style="top:1000.95px;font-size:14px;line-height:14px;color:#3a3f44;left:614px;">Revenue</div>
<div class="t" style="top:1000.95px;font-size:14px;line-height:14px;color:#3a3f44;left:748.4px;">Total Job Avg</div>
<div class="t" style="top:1000.95px;font-size:14px;line-height:14px;color:#3a3f44;left:882.8px;">Opp. Job Avg</div>
<div class="t" style="top:1000.95px;font-size:14px;line-height:14px;color:#3a3f44;left:1017.1px;">Opp. Conversion Rate</div>
<div class="t" style="top:1000.95px;font-size:14px;line-height:14px;color:#3a3f44;left:1202.75px;"># Opps</div>
<div class="t" style="top:1000.95px;font-size:14px;line-height:14px;color:#3a3f44;left:1337.5px;">Converted Jobs</div>
<div class="t" style="top:990.65px;font-size:14px;line-height:14px;color:#3a3f44;left:1472.3px;">Customer</div>
<div class="t" style="top:1010.85px;font-size:14px;line-height:14px;color:#3a3f44;left:1472.3px;">Satisfaction</div>
<div class="a" style="left:369.5px;top:1042px;width:1px;height:40px;background:#e6e6e6"></div>
<div class="a" style="left:382px;top:1054.5px;width:32px;height:30px;border-radius:6px;background:#16191c;overflow:hidden"><div class="a" style="left:5px;top:1px;width:22px;height:30px;background:#6d6f72"></div><div class="a" style="left:8px;top:2px;width:15px;height:20px;background:#3a5f8c"></div><div class="a" style="left:7px;top:21px;width:19px;height:12px;background:#c8604c;border-radius:9px 9px 0 0"></div><div class="a" style="left:2px;top:4px;width:5px;height:8px;background:#e8e8e8;border-radius:3px"></div></div>
<div class="t" style="top:1063.15px;font-size:14px;line-height:14px;color:#2a3035;left:430.4px;">FMA_Tech</div>
<div class="t" style="top:1063.15px;font-size:14px;line-height:14px;color:#2a3035;left:614px;">$26,261</div>
<div class="t" style="top:1063.15px;font-size:14px;line-height:14px;color:#2a3035;left:748px;">$1,194</div>
<div class="t" style="top:1063.15px;font-size:14px;line-height:14px;color:#2a3035;left:882px;">$1,313</div>
<div class="a" style="left:1016px;top:1068px;width:76px;height:5px;background:#efefef;border-radius:3px"></div>
<div class="a" style="left:1016px;top:1068px;width:64px;height:5px;background:#0b69da;border-radius:3px"></div>
<div class="t" style="top:1063.15px;font-size:14px;line-height:14px;color:#2a3035;left:1107.9px;">85%</div>
<div class="t" style="top:1063.15px;font-size:14px;line-height:14px;color:#2a3035;left:1203px;">20</div>
<div class="t" style="top:1063.15px;font-size:14px;line-height:14px;color:#2a3035;left:1337.5px;">17</div>
<div class="t" style="top:1063.15px;font-size:14px;line-height:14px;color:#2a3035;left:1472.3px;">N/A</div>
<div class="a" style="left:1594px;top:1042px;width:9px;height:40px;background:#f2f2f2"></div>
<div class="a" style="left:1595.5px;top:1042px;width:6.5px;height:40px;background:#a9a9a9"></div>
</body></html>
